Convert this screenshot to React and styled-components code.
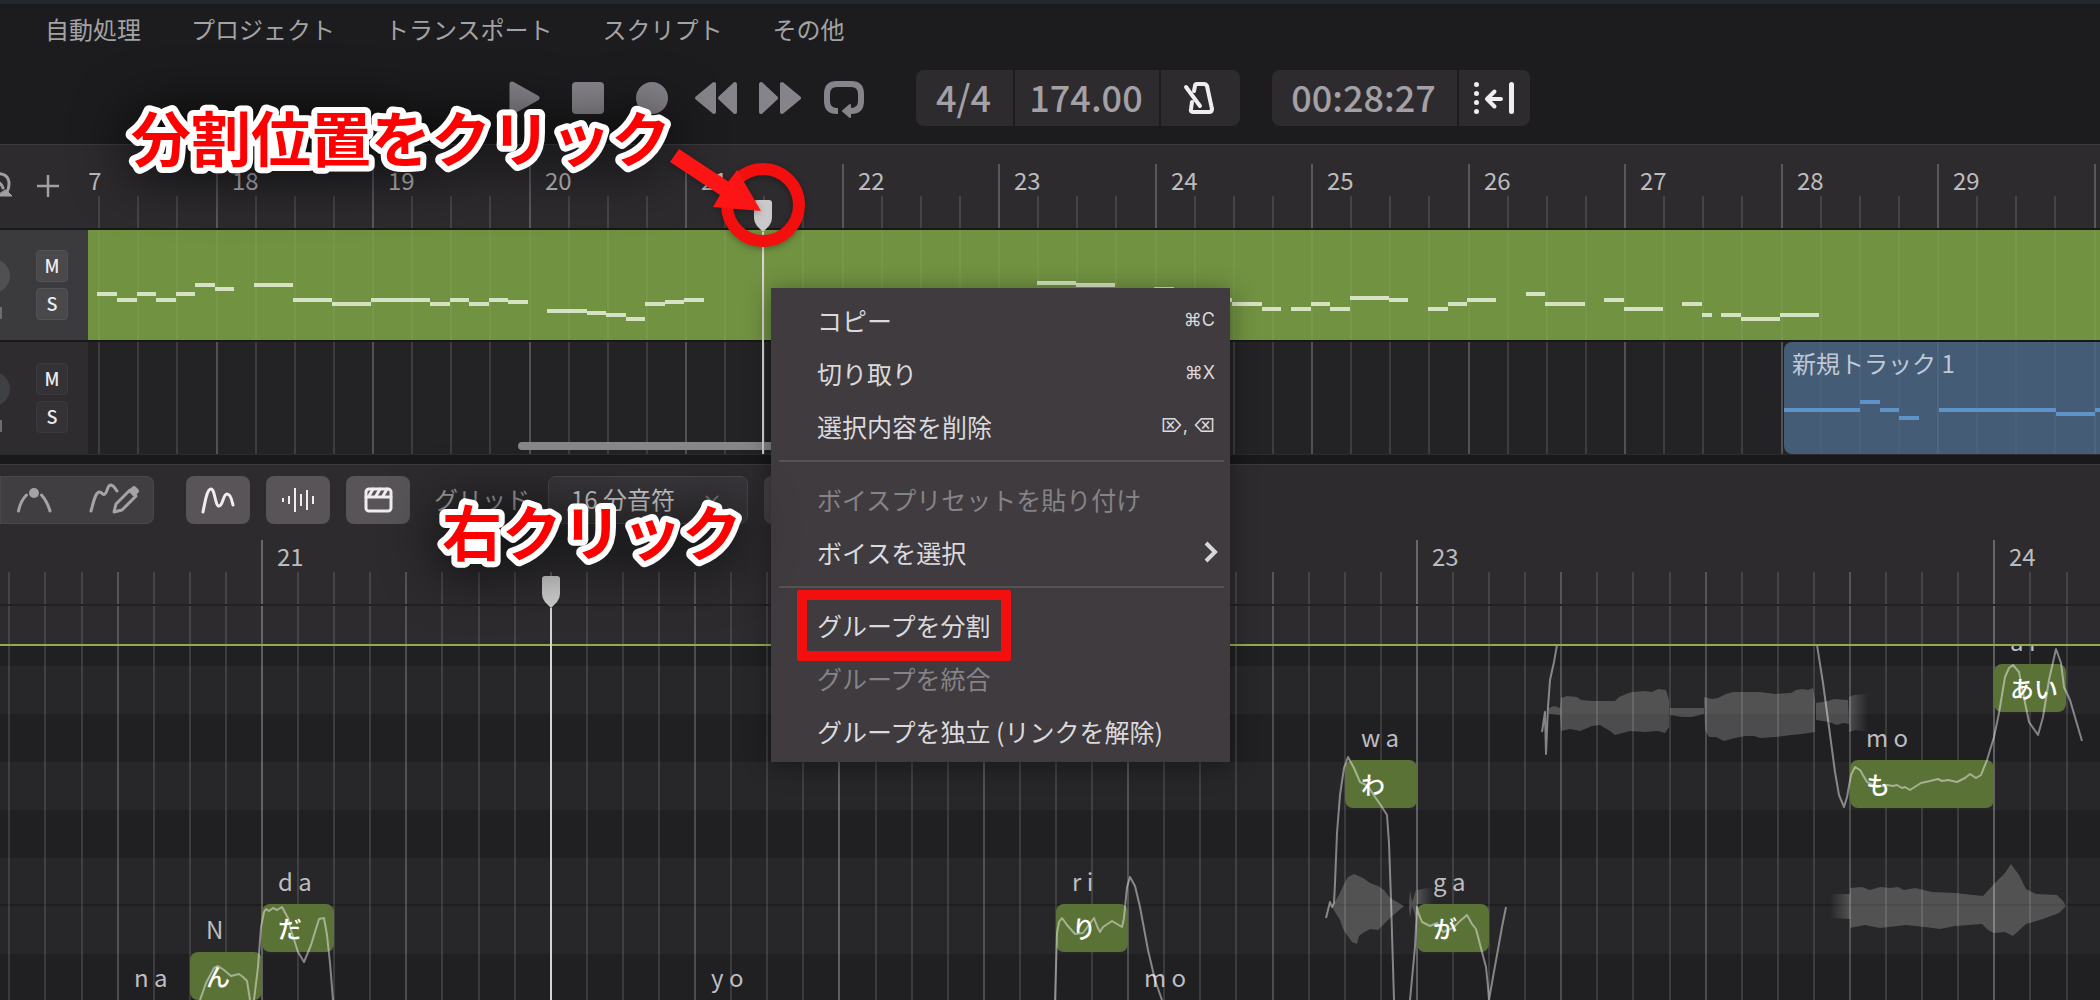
import styled, { createGlobalStyle } from "styled-components";

const BAR_WIDTH = 156.5;
const EDITOR_STEP = 36.09;
const ROW_HEIGHT = 48;

const bars = Array.from({ length: 14 }, (_, i) => 17 + i);

// x positions of the arrangement grid, four beats to the bar
const beats = bars.flatMap((bar) =>
  [0, 1, 2, 3].map((beat) => ({
    x: Math.round((bar - 17) * BAR_WIDTH - 29 + (beat * BAR_WIDTH) / 4),
    level: beat === 0 ? 3 : 0,
    bar: beat === 0 && bar < 30 ? bar : null,
  }))
);

// x positions of the editor grid, sixteen steps to the bar, counted from bar 21
const steps = Array.from({ length: 64 }, (_, i) => i - 7).map((step) => ({
  x: Math.round(261 + step * EDITOR_STEP),
  level: step % 16 === 0 ? 2 : step % 4 === 0 ? 1 : 0,
  bar: step % 16 === 0 ? 21 + step / 16 : null,
}));

const clipNotes = [
  [97, 20, 292], [117, 20, 298], [137, 19, 292], [156, 20, 298], [176, 19, 292],
  [195, 20, 283], [215, 19, 287], [254, 39, 283], [293, 39, 298], [332, 39, 302],
  [371, 59, 298], [430, 20, 302], [450, 19, 298], [469, 20, 302], [489, 19, 298],
  [508, 20, 300], [547, 40, 309], [587, 19, 311], [606, 20, 313], [626, 19, 317],
  [645, 20, 302], [665, 19, 300], [684, 20, 298], [1037, 39, 281], [1076, 39, 283],
  [1154, 20, 287], [1213, 19, 298], [1232, 30, 302], [1262, 19, 307], [1291, 20, 307],
  [1311, 19, 302], [1330, 20, 307], [1350, 39, 296], [1389, 19, 298], [1428, 20, 307],
  [1448, 19, 302], [1467, 29, 298], [1526, 19, 292], [1545, 40, 302], [1604, 20, 298],
  [1624, 39, 307], [1682, 20, 302], [1702, 10, 313], [1721, 20, 313], [1741, 39, 317],
  [1780, 39, 313],
];

const blueNotes = [
  [1783, 77, 408], [1860, 20, 400], [1880, 19, 408], [1899, 20, 416],
  [1939, 117, 408], [2056, 39, 412], [2095, 400, 408],
];

const notes = [
  { step: -4, row: 7, phoneme: "n a" },
  { step: -2, length: 2, row: 6, lyric: "ん", phoneme: "N" },
  { step: 0, length: 2, row: 5, lyric: "だ", phoneme: "d a" },
  { step: 12, row: 7, phoneme: "y o" },
  { step: 22, length: 2, row: 5, lyric: "り", phoneme: "r i" },
  { step: 24, row: 7, phoneme: "m o" },
  { step: 30, length: 2, row: 2, lyric: "わ", phoneme: "w a" },
  { step: 32, length: 2, row: 5, lyric: "が", phoneme: "g a" },
  { step: 44, length: 4, row: 2, lyric: "も", phoneme: "m o" },
  { step: 48, length: 2, row: 0, lyric: "あい", phoneme: "a i" },
];

const pitchCurves = [
  "200,1000 206,983 214,968 218,966 224,970 231,976 239,974 243,977 247,981 250,1000",
  "254,1000 258,967 261,927 264,912 266,909 269,911 273,908 277,910 282,907 288,918 291,930 298,952 304,962 311,945 319,919 324,918 327,935 330,963 333,1000",
  "1055,1000 1057,933 1059,922 1062,918 1067,925 1075,934 1083,933 1094,918 1097,926 1100,932 1103,927 1112,921 1117,924 1122,927 1124,918 1127,887 1130,877 1135,886 1140,907 1148,950 1155,980 1162,1000",
  "1326,918 1330,902 1332,907 1334,903 1335,883 1337,833 1340,795 1344,768 1348,757 1354,768 1360,782 1368,786 1375,797 1380,804 1387,815 1389,843 1391,900 1394,1000",
  "1410,1000 1415,947 1417,907 1418,912 1422,922 1430,926 1437,923 1443,932 1453,928 1460,921 1467,915 1472,924 1476,929 1482,952 1486,967 1488,987 1489,1000 1493,977 1497,955 1502,927 1506,907",
  "1542,732 1545,712 1546,754 1548,707 1550,680 1554,662 1557,645",
  "1817,645 1823,683 1829,727 1835,772 1839,795 1844,807 1847,797 1851,775 1855,767 1860,770 1867,782 1877,787 1887,785 1893,786 1897,785 1902,788 1905,787 1910,790 1921,783 1930,781 1938,779 1942,781 1948,780 1957,782 1965,778 1970,774 1976,778 1981,775 1987,760 1994,737 1999,713 2005,677 2009,668 2013,665 2019,672 2023,693 2029,722 2038,735 2043,717 2049,680 2056,649 2061,663 2064,687 2070,700 2082,741",
];

const waveforms = [
  "1549,708 1554,706 1560,708 1561,698 1567,696 1577,697 1581,700 1592,701 1615,701 1619,697 1626,694 1632,692 1645,691 1652,692 1658,689 1666,690 1669,700 1669,727 1665,733 1658,731 1645,732 1630,731 1615,735 1610,731 1600,725 1592,726 1580,731 1570,729 1561,731 1560,715 1549,714",
  "1670,708 1704,708 1704,714 1692,717 1682,717 1670,715",
  "1704,697 1712,699 1718,698 1726,694 1733,692 1760,692 1775,694 1791,693 1796,690 1802,689 1808,690 1813,688 1815,700 1815,732 1802,734 1791,735 1775,737 1760,738 1754,736 1745,736 1735,738 1724,741 1716,737 1709,737 1705,730",
  "1816,703 1828,701 1834,699 1848,700 1849,724 1843,723 1837,725 1829,722 1816,720",
  "1850,888 1862,887 1870,890 1880,887 1890,888 1898,887 1904,890 1915,888 1932,892 1955,893 1983,896 1994,884 2005,873 2011,864 2019,875 2026,889 2036,894 2057,895 2063,901 2066,906 2059,913 2043,919 2026,924 2013,936 2005,932 1994,933 1988,930 1982,924 1955,926 1940,929 1925,927 1906,925 1880,928 1865,925 1850,928",
  "1332,907 1340,893 1344,884 1348,877 1354,874 1363,878 1370,883 1378,886 1384,890 1390,898 1404,906 1397,912 1390,918 1378,930 1370,929 1363,933 1359,936 1357,944 1352,942 1347,935 1343,929 1340,920",
  "1409,904 1410,890 1412,902 1416,890 1416,918 1412,906 1410,918 1409,908",
];

const menuItems = [
  { label: "コピー", shortcut: "⌘C" },
  { label: "切り取り", shortcut: "⌘X" },
  { label: "選択内容を削除", shortcut: "⌦, ⌫" },
  { separator: true },
  { label: "ボイスプリセットを貼り付け", disabled: true },
  { label: "ボイスを選択", submenu: true },
  { separator: true },
  { label: "グループを分割", marked: true },
  { label: "グループを統合", disabled: true },
  { label: "グループを独立 (リンクを解除)" },
];

const Grid = ({ lines, top = 0, barTop = 0 }) =>
  lines.map(({ x, level }) => (
    <Line key={x} $level={level} $top={level >= 2 ? barTop : top} style={{ left: x }} />
  ));

const Track = ({ active, children }) => (
  <TrackRow $active={active}>
    <TrackHeader $active={active}>
      <Fader viewBox="0 0 12 112" aria-hidden="true">
        <circle cx="-7" cy="47" r="17" fill={active ? "#505052" : "#3f4043"} />
        <rect x="0" y="78" width="2" height="12" fill="#6d6d70" />
      </Fader>
      <TrackButtons>
        <TrackButton $active={active}>M</TrackButton>
        <TrackButton $active={active}>S</TrackButton>
      </TrackButtons>
    </TrackHeader>
    <Lane>{children}</Lane>
  </TrackRow>
);

const Marker = () => (
  <MarkerShape viewBox="0 0 18 32" aria-hidden="true">
    <path d="M0 3a3 3 0 0 1 3-3h12a3 3 0 0 1 3 3v15q0 4-3 8l-6 6-6-6q-3-4-3-8z" />
  </MarkerShape>
);

const App = () => {
  return (
    <Page>
      <GlobalStyle />
      <TitleEdge />
      <MenuBar>
        {["自動処理", "プロジェクト", "トランスポート", "スクリプト", "その他"].map(
          (name) => (
            <MenuBarItem key={name}>{name}</MenuBarItem>
          )
        )}
      </MenuBar>

      <Transport>
        <TransportButton aria-label="再生">
          <svg viewBox="-32 -28 64 56">
            <path d="M-12-14 13 0-12 14z" strokeWidth="5" />
          </svg>
        </TransportButton>
        <TransportButton aria-label="停止">
          <svg viewBox="-32 -28 64 56">
            <rect x="-16" y="-16" width="32" height="32" rx="4" stroke="none" />
          </svg>
        </TransportButton>
        <TransportButton aria-label="録音">
          <svg viewBox="-32 -28 64 56">
            <circle r="16" stroke="none" />
          </svg>
        </TransportButton>
        <TransportButton aria-label="巻き戻し">
          <svg viewBox="-32 -28 64 56">
            <path d="M-2-14V14L-19 0zM19-14V14L4 0z" strokeWidth="4" />
          </svg>
        </TransportButton>
        <TransportButton aria-label="早送り">
          <svg viewBox="-32 -28 64 56">
            <path d="M-19-14V14L-4 0zM2-14V14L19 0z" strokeWidth="4" />
          </svg>
        </TransportButton>
        <TransportButton aria-label="ループ">
          <svg viewBox="-32 -28 64 56">
            <path
              d="M-6 13h-1q-10 0-10-10v-7q0-10 10-10H7q10 0 10 10v7q0 10-10 10H4"
              fill="none"
              strokeWidth="6"
              strokeLinejoin="round"
            />
            <path d="M-1 13 6 7v12z" strokeWidth="2" />
          </svg>
        </TransportButton>

        <Display>
          <Cell $width={97}>4/4</Cell>
          <Cell $width={146}>174.00</Cell>
          <Cell $width={81} $icon aria-label="メトロノーム">
            <svg viewBox="1180 78 40 40">
              <path
                d="M1193 91l1-5q0-2 2-2h7q2 0 3 2l5 23q0 3-3 3h-16q-3 0-2-3l1-7M1185 87l14 19"
                strokeWidth="4"
              />
            </svg>
          </Cell>
        </Display>
        <Display>
          <Cell $width={185}>00:28:27</Cell>
          <Cell $width={73} $icon aria-label="自動スクロール">
            <svg viewBox="1475 78 40 40">
              <path
                d="M1476.500 84.500h0M1476.500 93.500h0M1476.500 102.500h0M1476.500 111.500h0M1511.500 84.500v27"
                strokeWidth="5"
                overflow="visible"
              />
              <path d="M1501 99h-14M1494.500 91.500 1487 99l7.500 7.500" strokeWidth="4" />
            </svg>
          </Cell>
        </Display>
      </Transport>

      <Arrangement>
        <RulerRow>
          <RulerHeader>
            <ToolIcon viewBox="0 0 16 32" width="16" aria-hidden="true">
              <path d="M-6 4Q9 2 9 14q0 4-2 8M-4 12q5 0 7 6" />
              <path d="M-4 26h16l-6-6z" fill="currentColor" strokeWidth="1" />
            </ToolIcon>
            <AddButton aria-label="トラックを追加">
              <svg viewBox="0 0 22 22" width="22" height="22">
                <path d="M11 0v22M0 11h22" stroke="currentColor" strokeWidth="2.5" />
              </svg>
            </AddButton>
          </RulerHeader>
          <Ruler>
            <Grid lines={beats} top={51} barTop={19} />
            {beats
              .filter(({ bar }) => bar)
              .map(({ x, bar }) => (
                <BarNumber key={bar} $top={19} style={{ left: x + 16 }}>
                  {bar}
                </BarNumber>
              ))}
          </Ruler>
        </RulerRow>
        <Track active>
          <GreenClip>
            <Grid lines={beats} />
            <ClipNotes viewBox="88 230 4000 110" width="4000" height="110">
              {clipNotes.map(([x, width, y]) => (
                <rect key={x} x={x} y={y} width={width} height="4" fill="#d5e2c3" />
              ))}
            </ClipNotes>
          </GreenClip>
        </Track>
        <Track>
          <Grid lines={beats} />
          <BlueClip>
            <ClipNotes viewBox="1784 342 2400 112" width="2400" height="112">
              {blueNotes.map(([x, width, y]) => (
                <rect key={x} x={x} y={y} width={width} height="4" fill="#5d93c8" />
              ))}
            </ClipNotes>
            <ClipName>新規トラック 1</ClipName>
          </BlueClip>
          <Scrollbar />
        </Track>
        <ArrangementPlayhead>
          <Marker />
        </ArrangementPlayhead>
      </Arrangement>
      <Divider />

      <Toolbar>
        <ToolGroup>
          <ToolButton $width={68} aria-label="コントロールポイント">
            <ToolIcon viewBox="16 482 36 36" width="36">
              <path d="M18.500 511q2-10 8-16M50 511q-3-10-8.500-16" />
              <circle cx="34" cy="493" r="5" fill="currentColor" stroke="none" />
            </ToolIcon>
          </ToolButton>
          <ToolButton $width={78} aria-label="鉛筆">
            <ToolIcon viewBox="89 482 52 36" width="52">
              <path d="M91 511c2-7 4-18 8-19 3-1 3 4 6 2 3-3 2-9 6-9 4 1 4 4 6 6" />
              <path d="M114 512l2-8 14-14 6 6-14 14z" />
              <path d="M128 491l4-4q2-2 4 0l2 2q2 2 0 4l-4 4z" fill="currentColor" stroke="none" />
            </ToolIcon>
          </ToolButton>
        </ToolGroup>
        <ToggleButton aria-label="ピッチ">
          <ToolIcon viewBox="200 482 36 36" width="36">
            <path d="M203 512c2-10 4-23 8-23 4 0 4 17 8 17s4-12 8-12 5 7 6 11" />
          </ToolIcon>
        </ToggleButton>
        <ToggleButton aria-label="波形">
          <ToolIcon viewBox="280 482 36 36" width="36">
            <path
              d="M283 498v4M289 496v8M295 488v24M301 494v12M307 490v20M313 496v8"
              strokeLinecap="butt"
            />
          </ToolIcon>
        </ToggleButton>
        <ToggleButton aria-label="テイク">
          <ToolIcon viewBox="360 482 36 36" width="36">
            <rect x="366" y="489" width="25" height="22" rx="3" />
            <path d="M366 497h25" />
            <path d="M369 496l4-7M376 496l4-7M383 496l4-7" strokeWidth="4" />
          </ToolIcon>
        </ToggleButton>
        <GridLabel htmlFor="grid">グリッド</GridLabel>
        <SelectBox>
          <GridSelect id="grid" defaultValue="16">
            <option value="8">8 分音符</option>
            <option value="16">16 分音符</option>
            <option value="32">32 分音符</option>
          </GridSelect>
          <SelectArrow viewBox="0 0 16 10" aria-hidden="true">
            <path d="M2 2l6 6 6-6" />
          </SelectArrow>
        </SelectBox>
        <SnapButton aria-label="スナップ" />
      </Toolbar>

      <Editor>
        <EditorRuler>
          <Grid lines={steps} top={32} />
          {steps
            .filter(({ bar }) => bar)
            .map(({ x, bar }) => (
              <BarNumber key={bar} $top={0} style={{ left: x + 16 }}>
                {bar}
              </BarNumber>
            ))}
        </EditorRuler>
        <GroupStrip>
          <Grid lines={steps} />
        </GroupStrip>
        <PianoRoll>
          <Grid lines={steps} />
          <Drawing viewBox="0 646 2400 954" width="2400" height="954">
            <defs>
              <linearGradient id="fadeOut">
                <stop offset="0" stopColor="#fff" stopOpacity="0.2" />
                <stop offset="1" stopColor="#fff" stopOpacity="0" />
              </linearGradient>
              <linearGradient id="fadeIn">
                <stop offset="0" stopColor="#fff" stopOpacity="0" />
                <stop offset="1" stopColor="#fff" stopOpacity="0.2" />
              </linearGradient>
            </defs>
            {waveforms.map((points) => (
              <polygon key={points} points={points} fill="#fff" fillOpacity="0.2" />
            ))}
            <path d="M1849 697l5-2 14-1v38l-12-2-7 2z" fill="url(#fadeOut)" />
            <path d="M1417 890l16-3v17h-16z" fill="url(#fadeOut)" />
            <path d="M1830 894h20v25l-20-1z" fill="url(#fadeIn)" />
          </Drawing>
          {notes.map(({ step, length, row, lyric, phoneme }) => {
            const left = Math.round(262 + step * EDITOR_STEP);
            const top = 18 + row * ROW_HEIGHT;
            return (
              <div key={step}>
                <Phoneme style={{ left, top: top - ROW_HEIGHT }}>{phoneme}</Phoneme>
                {lyric && (
                  <Note style={{ left, top, width: Math.round(length * EDITOR_STEP) }}>
                    {lyric}
                  </Note>
                )}
              </div>
            );
          })}
          <Drawing viewBox="0 646 2400 354" width="2400" height="354">
            {pitchCurves.map((points) => (
              <polyline
                key={points}
                points={points}
                fill="none"
                stroke="#fff"
                strokeOpacity="0.45"
                strokeWidth="2"
                strokeLinejoin="round"
              />
            ))}
          </Drawing>
        </PianoRoll>
        <EditorPlayhead>
          <Marker />
        </EditorPlayhead>
      </Editor>

      <ContextMenu role="menu">
        {menuItems.map(({ label, shortcut, separator, disabled, submenu, marked }, i) =>
          separator ? (
            <Separator key={i} />
          ) : (
            <MenuItem key={i} role="menuitem" disabled={disabled}>
              <span>{label}</span>
              {marked && <MarkFrame />}
              {shortcut && <Shortcut>{shortcut}</Shortcut>}
              {submenu && (
                <svg viewBox="0 0 16 24" width="16" height="24">
                  <path d="M3 3l9 9-9 9" fill="none" stroke="#d8d7da" strokeWidth="4" />
                </svg>
              )}
            </MenuItem>
          )
        )}
      </ContextMenu>

      <Annotations viewBox="0 0 1000 760" width="1000" height="760">
        <CalloutText x="131" y="162">
          分割位置をクリック
        </CalloutText>
        <CalloutText x="442" y="556">
          右クリック
        </CalloutText>
        <Pointer>
          <circle cx="763" cy="205" r="36" fill="none" stroke="#f40f0f" strokeWidth="12" />
          <path d="M679 149l50 33 8-12 24 41-48-4 7-12-50-33z" fill="#fd1515" />
        </Pointer>
      </Annotations>
    </Page>
  );
};

export default App;

const GlobalStyle = createGlobalStyle`
  * {
    box-sizing: border-box;
  }
  body {
    margin: 0;
    background: #1c1b1d;
  }
  body, button, select {
    font-family: "Noto Sans CJK JP", "Noto Sans", sans-serif;
    font-size: 24px;
    line-height: 32px;
  }
  button {
    border: none;
    padding: 0;
    background: none;
    color: inherit;
  }
`;
const Page = styled.div`
  position: relative;
  display: flex;
  flex-direction: column;
  height: 100vh;
  overflow: hidden;
  color: #bcbbbe;
`;
const TitleEdge = styled.div`
  flex: none;
  height: 4px;
  background: #23282c;
`;
const MenuBar = styled.nav`
  display: flex;
  flex: none;
  gap: 50px;
  padding: 9px 45px 11px;
`;
const MenuBarItem = styled.button`
  color: #a3a2a5;
`;
const Transport = styled.div`
  display: flex;
  flex: none;
  align-items: center;
  height: 88px;
  padding: 0 0 4px 492px;
`;
const TransportButton = styled.button`
  display: flex;
  width: 64px;
  height: 56px;

  svg {
    width: 64px;
    fill: #86838a;
    stroke: #86838a;
    stroke-linejoin: round;
  }
`;
const Display = styled.div`
  display: flex;
  height: 56px;
  margin-left: 32px;
  border-radius: 8px;
  overflow: hidden;
  background: #2e2b2f;

  ${TransportButton} + & {
    margin-left: 40px;
  }
`;
const Cell = styled.button`
  display: flex;
  align-items: center;
  justify-content: center;
  width: ${({ $width }) => $width}px;
  padding: ${({ $icon }) => ($icon ? "0" : "0 2px 4px 0")};
  color: #a3a0a6;
  font-size: 36px;
  font-weight: 500;

  & + & {
    border-left: 2px solid #1c1b1d;
  }
  svg {
    height: 40px;
    overflow: visible;
    fill: none;
    stroke: #efedf1;
    stroke-linecap: round;
    stroke-linejoin: round;
  }
`;
const Arrangement = styled.section`
  position: relative;
  display: flex;
  flex: none;
  flex-direction: column;
  gap: 2px;
  background: #19181a;
`;
const RulerRow = styled.div`
  display: flex;
  height: 84px;
  border-top: 1px solid #3b3a3d;
  background: #2d2b2e;
`;
const RulerHeader = styled.div`
  display: flex;
  flex: none;
  align-items: center;
  gap: 21px;
  width: 88px;
  padding-bottom: 2px;
  color: #a09fa2;
`;
const AddButton = styled.button`
  display: flex;
  width: 22px;
  height: 22px;
`;
const Ruler = styled.div`
  position: relative;
  flex: 1;
  overflow: hidden;
`;
const Line = styled.i`
  position: absolute;
  top: ${({ $top }) => $top}px;
  bottom: 0;
  width: 2px;
  background: rgba(255, 255, 255, ${({ $level }) => [0.12, 0.2, 0.28, 0.21][$level]});
`;
const BarNumber = styled.span`
  position: absolute;
  top: ${({ $top }) => $top}px;
  color: #bcbbbe;
`;
const TrackRow = styled.div`
  display: flex;
  height: ${({ $active }) => ($active ? 110 : 112)}px;
  background: #232224;
`;
const TrackHeader = styled.div`
  display: flex;
  flex: none;
  align-items: center;
  justify-content: space-between;
  width: 88px;
  padding-right: 20px;
  background: ${({ $active }) => ($active ? "#3b3a3c" : "#2f2c30")};
`;
const Fader = styled.svg`
  width: 12px;
  height: 112px;
`;
const TrackButtons = styled.div`
  display: flex;
  flex-direction: column;
  gap: 6px;
`;
const TrackButton = styled.button`
  width: 32px;
  height: 32px;
  padding-bottom: 2px;
  border: 1px solid ${({ $active }) => ($active ? "#525154" : "#3c3a3e")};
  border-radius: 4px;
  background: ${({ $active }) => ($active ? "#49484b" : "#343235")};
  color: #ecebee;
  font-size: 18px;
  font-weight: 500;
  line-height: 28px;
`;
const Lane = styled.div`
  position: relative;
  flex: 1;
  overflow: hidden;
`;
const GreenClip = styled.div`
  position: relative;
  height: 100%;
  background: #719241;

  ${Line} {
    background: rgba(255, 255, 255, 0.05);
  }
`;
const BlueClip = styled.div`
  position: absolute;
  top: 0;
  right: 0;
  bottom: 0;
  left: 1696px;
  overflow: hidden;
  padding: 5px 8px;
  border-radius: 8px 0 0 8px;
  background: rgba(76, 107, 137, 0.8);
`;
const ClipName = styled.span`
  position: relative;
  color: #c0c8d6;
`;
const ClipNotes = styled.svg`
  position: absolute;
  top: 0;
  left: 0;
`;
const Scrollbar = styled.div`
  position: absolute;
  bottom: 4px;
  left: 430px;
  width: 400px;
  height: 8px;
  border-radius: 4px;
  background: #87868a;
`;
const MarkerShape = styled.svg`
  width: 18px;
  height: 32px;
  fill: #c9c9c9;
`;
const Playhead = styled.div`
  position: absolute;
  bottom: 0;
  display: flex;
  flex-direction: column;
  align-items: center;
  width: 18px;

  &::after {
    content: "";
    flex: 1;
    width: 2px;
    background: #d4d4d4;
  }
`;
const ArrangementPlayhead = styled(Playhead)`
  top: 56px;
  left: 754px;
`;
const EditorPlayhead = styled(Playhead)`
  top: 36px;
  left: 542px;
`;
const Divider = styled.div`
  flex: none;
  height: 10px;
  border-top: 1px solid #2b2a2c;
  background: #19181a;
`;
const Toolbar = styled.div`
  display: flex;
  flex: none;
  align-items: center;
  gap: 16px;
  height: 76px;
  padding-bottom: 5px;
  border-top: 1px solid #3b3a3d;
  background: #2d2b2e;
`;
const ToolGroup = styled.div`
  display: flex;
  gap: 8px;
  height: 48px;
  margin-right: 16px;
  border-radius: 0 8px 8px 0;
  background: #403e41;
  box-shadow: inset 0 0 0 1px #49474a;
`;
const ToolButton = styled.button`
  display: flex;
  align-items: center;
  justify-content: center;
  width: ${({ $width }) => $width}px;
  color: #a5a3a8;
`;
const ToggleButton = styled.button`
  display: flex;
  align-items: center;
  justify-content: center;
  width: 64px;
  height: 48px;
  border-radius: 8px;
  background: #585458;
  color: #efedf1;

  path,
  rect {
    stroke-width: 3;
  }
  path[stroke-linecap] {
    stroke-width: 2;
  }
`;
const ToolIcon = styled.svg`
  height: 36px;
  fill: none;
  stroke: currentColor;
  stroke-width: 3;
  stroke-linecap: round;
  stroke-linejoin: round;
`;
const GridLabel = styled.label`
  margin: 0 2px 3px 8px;
  color: #a09ea2;
`;
const SelectBox = styled.div`
  position: relative;
`;
const GridSelect = styled.select`
  width: 200px;
  height: 48px;
  padding: 0 22px 3px;
  border: 1px solid #4a484c;
  border-radius: 8px;
  background: #38363a;
  color: #cfced1;
  appearance: none;
`;
const SelectArrow = styled.svg`
  position: absolute;
  top: 18px;
  right: 28px;
  width: 16px;
  fill: none;
  stroke: #77757a;
  stroke-width: 2;
`;
const SnapButton = styled(ToggleButton)`
  width: 120px;
  background: #464448;
`;
const Editor = styled.section`
  position: relative;
  display: flex;
  flex: 1;
  flex-direction: column;
  overflow: hidden;
`;
const EditorRuler = styled.div`
  position: relative;
  flex: none;
  height: 64px;
  background: #2d2b2e;
`;
const GroupStrip = styled.div`
  position: relative;
  flex: none;
  height: 42px;
  border-top: 2px solid #222123;
  border-bottom: 2px solid #8fad50;
  background: #2d2b2e;
`;
const PianoRoll = styled.div`
  position: relative;
  flex: 1;
  overflow: hidden;
  background:
    linear-gradient(#1e1e20, #1e1e20) 0 258px / 100% 2px no-repeat,
    linear-gradient(#202022, #202022) 0 308px / 100% 96px no-repeat,
    repeating-linear-gradient(#272729 0 48px, #202022 48px 96px) 0 20px / 100% 240px no-repeat,
    linear-gradient(#272729, #272729) 0 258px / 100% 50px no-repeat,
    #202022;
`;
const Drawing = styled.svg`
  position: absolute;
  top: 0;
  left: 0;
`;
const Phoneme = styled.span`
  position: absolute;
  padding: 9px 16px;
  color: #bebdc0;
`;
const Note = styled.button`
  position: absolute;
  height: 48px;
  padding: 0 16px;
  border-radius: 8px;
  background: #5b7237;
  color: #fff;
  font-weight: 500;
  text-align: left;
  white-space: nowrap;
`;
const ContextMenu = styled.div`
  position: absolute;
  top: 288px;
  left: 771px;
  width: 459px;
  padding: 8px 0 2px;
  background: #3f3b3f;
  box-shadow: 0 4px 24px rgba(0, 0, 0, 0.4);
`;
const MenuItem = styled.button`
  position: relative;
  display: flex;
  align-items: center;
  justify-content: space-between;
  width: 100%;
  height: 53px;
  padding: 0 11px 5px 46px;
  color: #dad9dc;
  font-size: 25px;

  &:disabled {
    color: #858386;
  }
`;
const Separator = styled.div`
  height: 2px;
  margin: 5px 6px 13px 8px;
  background: #555256;
`;
const Shortcut = styled.kbd`
  margin-right: 4px;
  font-family: Inter, "Noto Sans CJK JP", sans-serif;
  font-size: 18px;
`;
const MarkFrame = styled.span`
  position: absolute;
  top: -11px;
  left: 26px;
  width: 214px;
  height: 71px;
  border: 10px solid #f40f0f;
  border-radius: 2px;
`;
const Annotations = styled.svg`
  position: absolute;
  top: 0;
  left: 0;
  pointer-events: none;
`;
const CalloutText = styled.text`
  fill: #ff0000;
  stroke: #fff;
  stroke-width: 12px;
  stroke-linejoin: round;
  paint-order: stroke fill;
  font-size: 60px;
  font-weight: 700;
  filter: drop-shadow(0 4px 28px rgba(0, 0, 0, 0.8));
`;
const Pointer = styled.g`
  filter: drop-shadow(0 2px 3px rgba(0, 0, 0, 0.3));
`;
